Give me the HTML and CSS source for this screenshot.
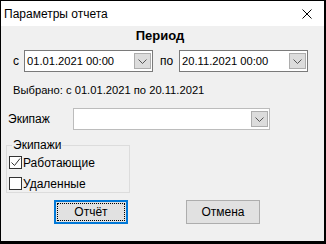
FILE: index.html
```html
<!DOCTYPE html>
<html lang="ru">
  <head>
    <meta charset="UTF-8" />
    <title>Параметры отчета</title>
    <link rel="stylesheet" href="styles.css">
  </head>
  <body>
    <div class="window">
      <div class="titlebar">
        <span class="title">Параметры отчета</span>
        <svg class="close" width="10" height="10" viewBox="0 0 10 10">
          <path d="M0.5 0.5 L9.5 9.5 M9.5 0.5 L0.5 9.5" stroke="#000" stroke-width="1" fill="none" />
        </svg>
      </div>
      <div class="client">
        <div class="heading">Период</div>
        <div class="dates">
          <span class="lbl-from">с</span>
          <div class="combo combo-date">
            <span class="value">01.01.2021 00:00</span>
            <span class="drop">
              <svg width="9" height="5" viewBox="0 0 9 5"><path d="M0.5 0.5 L4.5 4.5 L8.5 0.5" stroke="#555" fill="none" /></svg>
            </span>
          </div>
          <span class="lbl-to">по</span>
          <div class="combo combo-date">
            <span class="value">20.11.2021 00:00</span>
            <span class="drop">
              <svg width="9" height="5" viewBox="0 0 9 5"><path d="M0.5 0.5 L4.5 4.5 L8.5 0.5" stroke="#555" fill="none" /></svg>
            </span>
          </div>
        </div>
        <div class="selected">Выбрано: с 01.01.2021 по 20.11.2021</div>
        <div class="crew-row">
          <span class="lbl-crew">Экипаж</span>
          <div class="combo combo-crew">
            <span class="value"></span>
            <span class="drop">
              <svg width="9" height="5" viewBox="0 0 9 5"><path d="M0.5 0.5 L4.5 4.5 L8.5 0.5" stroke="#555" fill="none" /></svg>
            </span>
          </div>
        </div>
        <fieldset class="group">
          <legend>Экипажи</legend>
          <label class="check">
            <span class="box">
              <svg width="11" height="11" viewBox="0 0 11 11"><path d="M1.5 5.5 L4.5 8.5 L10 1.5" stroke="#333" stroke-width="1" fill="none" /></svg>
            </span>
            Работающие
          </label>
          <label class="check">
            <span class="box"></span>
            Удаленные
          </label>
        </fieldset>
        <div class="buttons">
          <button class="btn btn-default"><span class="focus">Отчёт</span></button>
          <button class="btn">Отмена</button>
        </div>
      </div>
    </div>
  </body>
</html>
```

FILE: styles.css
```css
html,
body {
  margin: 0;
  padding: 0;
  background: #000;
  font-family: "Liberation Sans", Arial, sans-serif;
  font-size: 12px;
  color: #000;
}

.window {
  width: 323px;
  height: 240px;
  margin: 1px 0 0 1px;
  background: #f0f0f0;
  display: flex;
  flex-direction: column;
}

.titlebar {
  height: 25px;
  background: #fff;
  display: flex;
  align-items: center;
  justify-content: space-between;
  padding: 0 12px 0 3px;
}

.title {
  font-size: 12px;
}

.close {
  display: block;
  margin-top: 1px;
}

.client {
  flex: 1;
  padding: 0 0 0 5px;
}

.heading {
  font-weight: bold;
  font-size: 13px;
  line-height: 16px;
  margin-top: 2px;
  text-align: center;
  padding-right: 10px;
}

.dates {
  display: flex;
  align-items: center;
  margin-top: 6px;
  height: 22px;
}

.lbl-from {
  width: 18px;
  padding-left: 7px;
  box-sizing: border-box;
}

.lbl-to {
  width: 26px;
  padding-left: 7px;
  box-sizing: border-box;
}

.combo {
  display: flex;
  align-items: center;
  justify-content: space-between;
  box-sizing: border-box;
  height: 22px;
  background: #fff;
  border: 1px solid #7a7a7a;
  padding: 0 1px 0 2px;
}

.combo .value {
  font-size: 11.2px;
}

.combo-date {
  width: 129px;
}

.drop {
  width: 17px;
  height: 16px;
  box-sizing: border-box;
  background: #dcdcdc;
  border: 1px solid #adadad;
  display: flex;
  align-items: center;
  justify-content: center;
}

.drop svg {
  display: block;
  margin-top: 1px;
}

.selected {
  margin-top: 11px;
  padding-left: 7px;
  line-height: 14px;
  font-size: 11.2px;
}

.crew-row {
  display: flex;
  align-items: center;
  margin-top: 11px;
}

.lbl-crew {
  width: 67px;
  padding-left: 2px;
  box-sizing: border-box;
}

.combo-crew {
  width: 197px;
  border-color: #bcbcbc;
}

.group {
  width: 124px;
  height: 54px;
  box-sizing: border-box;
  margin: 9px 0 0 0;
  padding: 0 0 0 2px;
  border: 1px solid #dcdcdc;
}

.group legend {
  padding: 0 1px;
  margin-left: 3px;
  line-height: 13px;
}

.check {
  display: flex;
  align-items: center;
  height: 21px;
  gap: 1px;
}

.box {
  width: 13px;
  height: 13px;
  box-sizing: border-box;
  background: #fff;
  border: 1px solid #333;
  display: flex;
  align-items: center;
  justify-content: center;
}

.box svg {
  display: block;
}

.buttons {
  display: flex;
  margin-top: 7px;
  padding-left: 48px;
  gap: 58px;
}

.btn {
  width: 74px;
  height: 24px;
  box-sizing: border-box;
  background: #e1e1e1;
  border: 1px solid #adadad;
  font-family: inherit;
  font-size: 12px;
  color: #000;
  padding: 0;
}

.btn-default {
  border: 2px solid #0078d7;
  padding: 1px;
}

.focus {
  display: flex;
  align-items: center;
  justify-content: center;
  height: 100%;
  border: 1px dotted #000;
  box-sizing: border-box;
}
```
